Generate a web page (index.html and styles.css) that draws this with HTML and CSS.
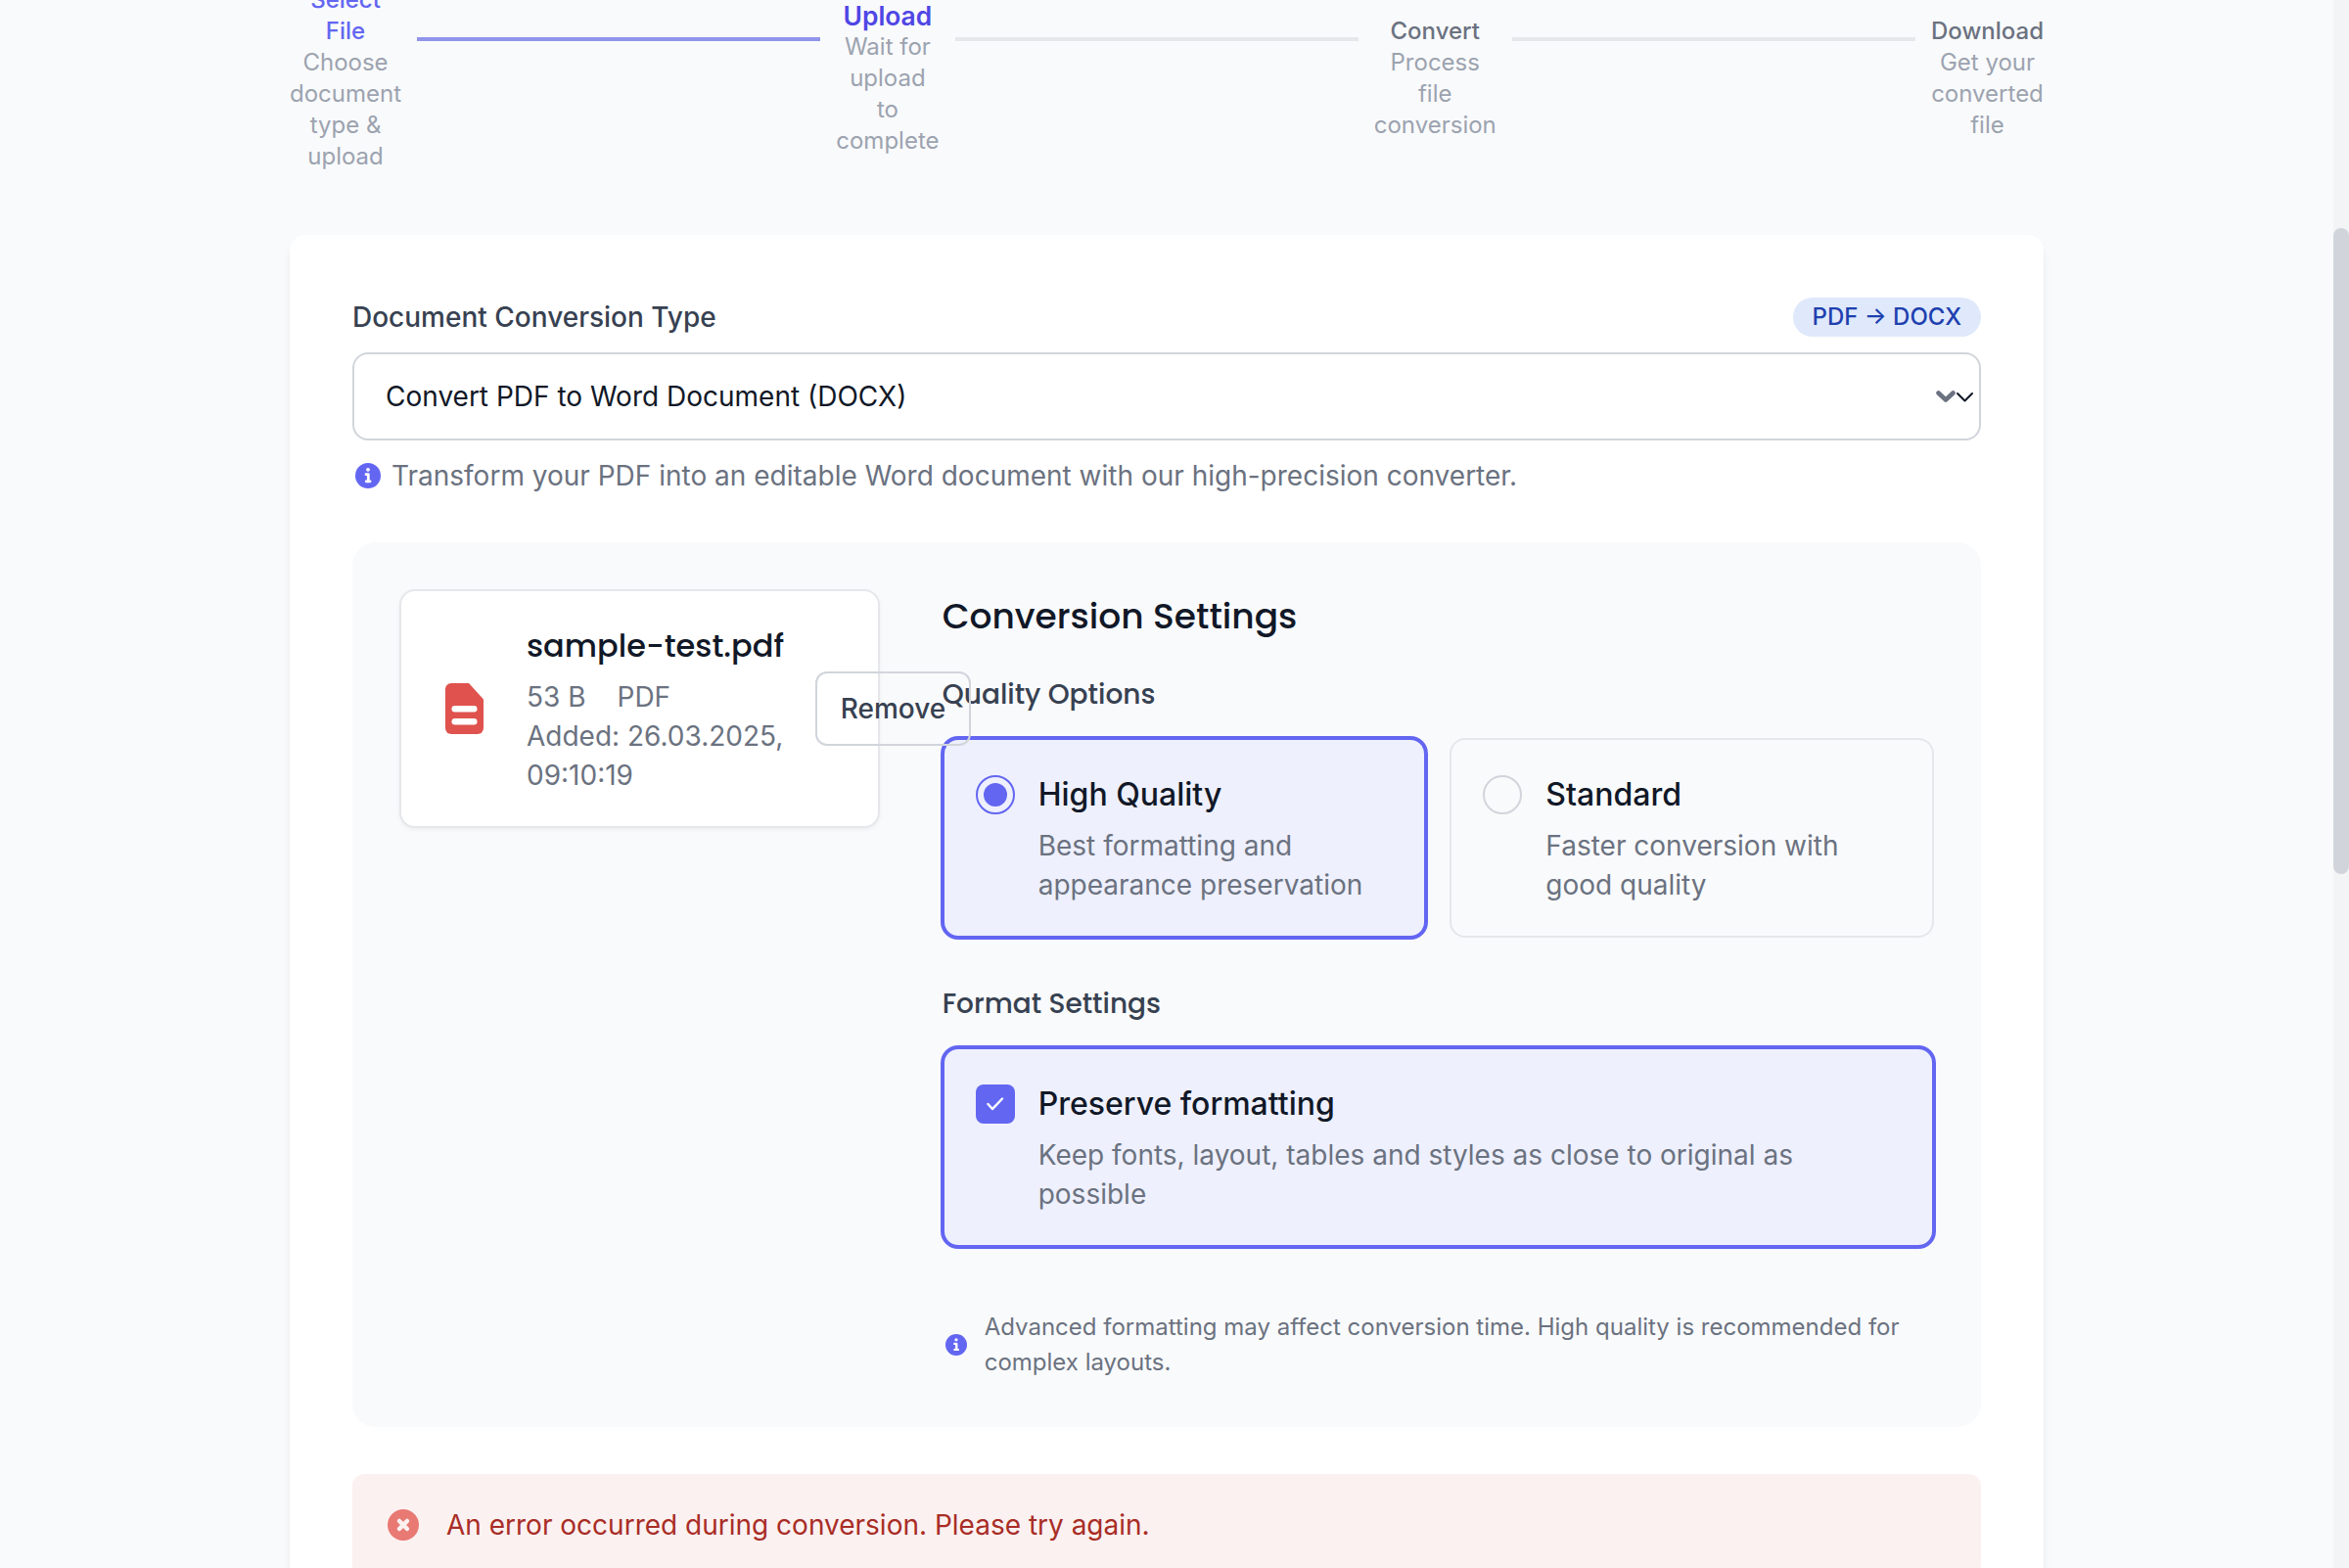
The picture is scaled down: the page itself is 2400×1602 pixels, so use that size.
FILE: index.html
```html
<!DOCTYPE html>
<html lang="en">
<head>
<meta charset="utf-8">
<title>Document Converter</title>
<link rel="stylesheet" href="styles.css">
</head>
<body>
<main class="container">
  <div class="steps">
    <div class="step step-done"><span class="step-icon"></span><span class="step-title">Select File</span><span class="step-desc">Choose document type &amp; upload</span></div>
    <div class="line line-done"></div>
    <div class="step step-active"><span class="step-icon"></span><span class="step-title">Upload</span><span class="step-desc">Wait for upload to complete</span></div>
    <div class="line"></div>
    <div class="step"><span class="step-icon"></span><span class="step-title">Convert</span><span class="step-desc">Process file conversion</span></div>
    <div class="line"></div>
    <div class="step"><span class="step-icon"></span><span class="step-title">Download</span><span class="step-desc">Get your converted file</span></div>
  </div>
  <section class="card">
    <div class="field-head"><label class="label">Document Conversion Type</label><span class="badge">PDF → DOCX</span></div>
    <div class="select">
      <span class="select-text">Convert PDF to Word Document (DOCX)</span>
      <svg class="chevrons" width="40" height="18" viewBox="0 0 40 18" fill="none" stroke-linecap="round" stroke-linejoin="round"><path d="M2.500 5.500l7.500 7 7.500-7" stroke="#6b7280" stroke-width="4.600"/><path d="M22 6l7.500 7.500L37 6" stroke="#111827" stroke-width="2"/></svg>
    </div>
    <p class="hint"><svg class="hint-icon" viewBox="0 0 26 26"><circle cx="13" cy="13" r="13" fill="#6366f1"/><circle cx="13" cy="6.800" r="1.900" fill="#fff"/><path d="M11 11.700h2.300v7M11.200 18.800h3.900" fill="none" stroke="#fff" stroke-width="2.800" stroke-linecap="round" stroke-linejoin="round"/></svg><span>Transform your PDF into an editable Word document with our high-precision converter.</span></p>
    <div class="panel">
      <div class="file">
        <div class="file-icon"><svg width="39" height="52" viewBox="0 0 39 52"><path d="M6 0h18L39 16.500V46a6 6 0 0 1-6 6H6a6 6 0 0 1-6-6V6a6 6 0 0 1 6-6z" fill="#df524d"/><rect x="6.500" y="23" width="26" height="6.500" rx="3.200" fill="#fff"/><rect x="6.500" y="36" width="26" height="6.500" rx="3.200" fill="#fff"/></svg></div>
        <div class="file-info">
          <h3 class="file-name">sample-test.pdf</h3>
          <div class="file-meta"><span>53 B</span><span>PDF</span></div>
          <div class="file-date">Added: 26.03.2025, 09:10:19</div>
        </div>
        <button class="remove">Remove</button>
      </div>
      <div class="settings">
        <h2 class="settings-title">Conversion Settings</h2>
        <h4 class="group-title quality">Quality Options</h4>
        <div class="options">
          <div class="option selected"><span class="radio radio-on"></span><div><div class="option-title">High Quality</div><div class="option-desc">Best formatting and appearance preservation</div></div></div>
          <div class="option"><span class="radio"></span><div><div class="option-title">Standard</div><div class="option-desc">Faster conversion with good quality</div></div></div>
        </div>
        <h4 class="group-title format">Format Settings</h4>
        <div class="option selected"><span class="check"><svg width="20" height="16" viewBox="0 0 20 16"><path d="M2.500 8l4.500 5L17 2.500" fill="none" stroke="#fff" stroke-width="2.400" stroke-linecap="round" stroke-linejoin="round"/></svg></span><div><div class="option-title">Preserve formatting</div><div class="option-desc">Keep fonts, layout, tables and styles as close to original as possible</div></div></div>
        <div class="note"><svg class="note-icon" viewBox="0 0 26 26"><circle cx="13" cy="13" r="13" fill="#6366f1"/><circle cx="13" cy="6.800" r="1.900" fill="#fff"/><path d="M11 11.700h2.300v7M11.200 18.800h3.900" fill="none" stroke="#fff" stroke-width="2.800" stroke-linecap="round" stroke-linejoin="round"/></svg><span>Advanced formatting may affect conversion time. High quality is recommended for complex layouts.</span></div>
      </div>
    </div>
    <div class="error"><svg width="32" height="32" viewBox="0 0 32 32"><circle cx="16" cy="16" r="16" fill="#e87973"/><path d="M12 12l8 8M20 12l-8 8" stroke="#fcf1f1" stroke-width="4.500" stroke-linecap="round"/></svg><span>An error occurred during conversion. Please try again.</span></div>
  </section>
</main>
<div class="scrollbar"><div class="thumb"></div></div>
</body>
</html>
```
FILE: styles.css
```css
* { box-sizing: border-box; }
html, body { margin: 0; height: 1602px; overflow: hidden; }
body {
  display: flex;
  background: #f9fafc;
  color: #111827;
  font-family: Inter, "Liberation Sans", sans-serif;
  font-size: 28px;
  line-height: 40px;
}
h2, h3, h4, p { margin: 0; font-weight: 500; }
.container { width: 1792px; margin: -96px auto 0; }
.scrollbar { flex: none; width: 16px; height: 1602px; padding-top: 233px; background: #f3f4f6; }
.thumb { height: 660px; border-radius: 8px; background: #d1d5db; }

.steps { display: flex; align-items: center; height: 272px; font-size: 24px; line-height: 32px; }
.step { display: flex; flex-direction: column; align-items: center; width: min-content; text-align: center; color: #6b7280; }
.step-icon { height: 80px; }
.step-title { font-weight: 500; }
.step-desc { color: #9ca3af; }
.step-done .step-title { color: #6366f1; }
.step-active .step-title { color: #4f46e5; font-weight: 600; font-size: 26.4px; }
.line { flex: 1; height: 4px; margin: 0 16px; background: #e5e7eb; }
.line-done { background: #9094ea; }

.card { height: 1426px; margin-top: 64px; padding: 64px; border-radius: 16px; background: #fff; box-shadow: 0 8px 12px -2px rgba(0, 0, 0, 0.08), 0 4px 8px -4px rgba(0, 0, 0, 0.06); }
.field-head { display: flex; justify-content: space-between; align-items: center; height: 40px; margin-bottom: 16px; }
.label { font-weight: 500; color: #374151; }
.badge { padding: 4px 20px; border-radius: 20px; background: #dfe9fb; color: #1e40af; font-size: 24px; line-height: 32px; font-weight: 500; }
.select { display: flex; align-items: center; justify-content: space-between; height: 90px; padding: 0 4px 0 32px; border: 2px solid #d1d5db; border-radius: 16px; }
.hint { display: flex; align-items: center; margin-top: 16px; font-weight: 400; color: #6b7280; }
.hint-icon { width: 26px; height: 26px; margin: 0 11px 0 3px; }

.panel { display: grid; grid-template-columns: 490.700px 1013.300px; gap: 64px; align-items: start; margin-top: 48px; padding: 48px; border-radius: 24px; background: #f9fafc; }
.file { display: flex; align-items: center; height: 244px; padding: 0 32px; border: 2px solid #e5e7eb; border-radius: 16px; background: #fff; box-shadow: 0 2px 4px rgba(0, 0, 0, 0.05); }
.file-icon { display: flex; flex: none; width: 64px; justify-content: center; margin-right: 32px; }
.file-info { flex: none; width: 264px; margin-right: 31px; color: #6b7280; }
.file-name, .settings-title, .group-title { font-family: Poppins, Inter, sans-serif; }
.file-name { margin-bottom: 8px; color: #111827; font-size: 32px; line-height: 48px; }
.file-meta { display: flex; gap: 32px; }
.remove { position: relative; z-index: 1; flex: none; width: 159px; height: 76px; padding: 0; border: 2px solid #d1d5db; border-radius: 12px; background: transparent; color: #374151; font: inherit; font-weight: 500; }
.settings-title { padding-top: 1px; font-size: 36px; line-height: 54px; }
.group-title { color: #374151; font-size: 28px; line-height: 42px; margin-bottom: 23px; }
.quality { margin-top: 32px; }
.format { margin-top: 47px; }
.options { display: grid; grid-template-columns: 1fr 1fr; gap: 24px; }
.option { display: flex; gap: 24px; height: 204px; padding: 32px; border: 2px solid #e5e7eb; border-radius: 16px; }
.selected { border-color: #6366f1; background: #eef0fd; box-shadow: 0 0 0 2px #6366f1; }
.option-title { margin-bottom: 8px; font-size: 32px; line-height: 48px; font-weight: 500; }
.option-desc { color: #6b7280; }
.radio, .check { display: flex; flex: none; align-items: center; justify-content: center; width: 40px; height: 40px; margin-top: 4px; }
.radio { border: 2px solid #d1d5db; border-radius: 50%; }
.radio-on { border-color: #6366f1; }
.radio-on::before { content: ""; width: 24px; height: 24px; border-radius: 50%; background: #6366f1; }
.check { border-radius: 8px; background: #6366f1; }
.note { display: flex; align-items: center; margin-top: 64px; color: #6b7280; font-size: 24px; line-height: 36px; }
.note-icon { flex: none; width: 22px; height: 22px; margin: 0 18px 0 3px; }
.error { display: flex; align-items: center; gap: 28px; height: 104px; margin-top: 48px; padding: 0 36px; border-radius: 12px; background: #fcf1f1; color: #a82d26; }
```
